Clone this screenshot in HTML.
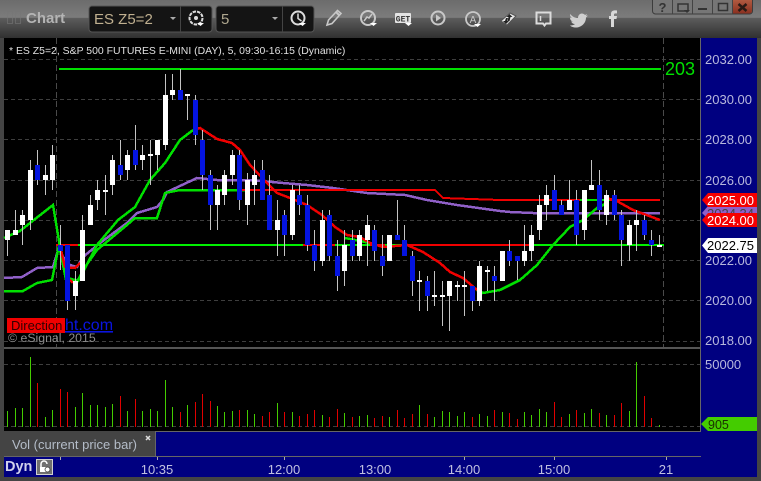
<!DOCTYPE html>
<html><head><meta charset="utf-8"><style>
html,body{margin:0;padding:0;background:#444;width:761px;height:481px;overflow:hidden}
svg{display:block;font-family:"Liberation Sans",sans-serif}
</style></head><body>
<svg width="761" height="481" viewBox="0 0 761 481" xmlns="http://www.w3.org/2000/svg">
<defs><linearGradient id="tb" x1="0" y1="0" x2="0" y2="1"><stop offset="0" stop-color="#6c6c6c"/><stop offset=".46" stop-color="#7c7c7c"/><stop offset=".48" stop-color="#5c5c5c"/><stop offset="1" stop-color="#303030"/></linearGradient>
<linearGradient id="cl" x1="0" y1="0" x2="0" y2="1"><stop offset="0" stop-color="#b05a40"/><stop offset="1" stop-color="#8a3020"/></linearGradient></defs>
<rect width="761" height="481" fill="#444"/>
<rect width="761" height="38" fill="url(#tb)"/>
<!-- window controls -->
<rect x="652.5" y="-3" width="100" height="17" rx="3" fill="#767676" stroke="#3c3c3c"/>
<path d="M733 0h19v11a2.500 2.500 0 0 1-2.500 2.500H733z" fill="url(#cl)"/>
<path d="M672.500 0V14M692.500 0V14M712.500 0V14M732.500 0V14" stroke="#444"/>
<text x="662.500" y="12" font-size="13" font-weight="bold" fill="#333" text-anchor="middle">?</text>
<path d="M678 4h10v7h-10z" fill="none" stroke="#333" stroke-width="1.500"/><path d="M684 10h6l-3 3z" fill="#333"/>
<rect x="698" y="8" width="9" height="2" fill="#333"/>
<rect x="718.500" y="3.500" width="9" height="7" fill="none" stroke="#333" stroke-width="1.500"/>
<path d="M738.500 4l8 7M746.500 4l-8 7" stroke="#2a1a14" stroke-width="2.500"/>
<!-- Chart title -->
<rect x="7.500" y="11.500" width="5" height="12" fill="none" stroke="#777" opacity=".6"/><rect x="15.500" y="11.500" width="5" height="12" fill="none" stroke="#777" opacity=".6"/>
<text x="26" y="23" font-size="15" font-weight="bold" fill="#b4b4b4">Chart</text>
<!-- Dropdowns -->
<rect x="89" y="6" width="123" height="26" rx="3" fill="#141414" stroke="#555"/>
<path d="M180.500 6V32" stroke="#444"/>
<text x="94" y="24" font-size="15" fill="#c0b090">ES Z5=2</text>
<path d="M170 17h6l-3 3z" fill="#aaa"/>
<rect x="216" y="6" width="98" height="26" rx="3" fill="#141414" stroke="#555"/>
<path d="M282.500 6V32" stroke="#444"/>
<text x="221" y="24" font-size="15" fill="#b0a890">5</text>
<path d="M272 17h6l-3 3z" fill="#aaa"/>
<!-- gear -->
<circle cx="196" cy="18" r="6.500" fill="none" stroke="#ddd" stroke-width="2" stroke-dasharray="3.500 1"/><circle cx="196" cy="18" r="2" fill="#ddd"/>
<path d="M197 23h7l-3.500 3z" fill="#fff"/>
<!-- clock -->
<circle cx="298" cy="18" r="6.500" fill="none" stroke="#ddd" stroke-width="2"/><path d="M298 13.500V18.500L301.500 21" fill="none" stroke="#ddd" stroke-width="1.500"/>
<path d="M299 23h7l-3.500 3z" fill="#fff"/>
<!-- pencil -->
<path d="M327 25l1.500-5 9-9.500 3.500 3-9 10z" fill="none" stroke="#c8c8c8" stroke-width="1.600"/><path d="M336 12l3.500 3.500" stroke="#c8c8c8" stroke-width="2"/>
<!-- dial -->
<circle cx="368" cy="18" r="7" fill="none" stroke="#c8c8c8" stroke-width="2"/><path d="M364 21l3-4 2 1 3-4" fill="none" stroke="#c8c8c8" stroke-width="1.500"/>
<path d="M370 23h7l-3.500 3z" fill="#fff"/>
<!-- GET -->
<rect x="395" y="13" width="16" height="10" rx="1" fill="#e4e4e4"/>
<text x="403" y="21.500" font-size="8" font-weight="bold" fill="#333" text-anchor="middle" font-family="Liberation Mono, monospace">GET</text>
<path d="M405 23h7l-3.500 3z" fill="#fff"/>
<!-- play -->
<circle cx="438" cy="18" r="6.500" fill="none" stroke="#c8c8c8" stroke-width="2"/><path d="M436 14.500v7l5-3.500z" fill="#c8c8c8"/>
<!-- A -->
<circle cx="473" cy="19" r="7" fill="none" stroke="#c8c8c8" stroke-width="1.800"/>
<text x="473" y="23" font-size="10" fill="#c8c8c8" text-anchor="middle">A</text>
<path d="M474 24h7l-3.500 3z" fill="#fff"/>
<!-- diamond -->
<path d="M501 21l9-8 6 3-9 9z" fill="#e8e8e8" stroke="#555"/><path d="M509.500 14l3 3h-2l-1 4h-2l1-4h-2z M506 24l-3-3h2l1-3h2l-1 3h2z" fill="#222"/>
<!-- bubble -->
<path d="M536.500 12.500h14v11h-4.500l-1.500 2-1.500-2h-6.500z" fill="none" stroke="#dcdcdc" stroke-width="2"/><path d="M540.500 16v5" stroke="#dcdcdc" stroke-width="1.500"/>
<!-- twitter -->
<path d="M570 14c3 3 5 4 8 4 0-4 4-6 7-3l2-1-1 2 2-.5-2 2c0 6-5 10-10 10-3 0-5-1-6-2 2 0 4-.5 5-1.500-2 0-3-1-4-2.500h2c-2-.5-3-2-3-4l2 .5c-2-1.500-2-3-2-4z" fill="#cfcfcf"/>
<!-- facebook -->
<path d="M611 27v-8h-2v-3h2v-2c0-3 2-4 6-3.500v3c-2-.3-3 0-3 1v1.500h3l-.5 3H614v8z" fill="#d8d8d8"/>

<!-- chart -->
<rect x="4" y="38" width="696" height="310" fill="#000"/>
<rect x="4" y="349" width="696" height="82" fill="#000"/>
<rect x="4" y="347" width="696" height="2" fill="#555"/>
<g shape-rendering="crispEdges">
<path d="M4 59.500H700M4 99.500H700M4 139.500H700M4 180.500H700M4 220.500H700M4 260.500H700M4 300.500H700M4 341.500H700M4 364.500H700M4 426.500H700" stroke="#3e3e3e" stroke-dasharray="4 3"/>
<path d="M56.500 38V347M663.500 38V347" stroke="#4a4a4a" stroke-dasharray="6 3"/>
<path d="M59 69H661" stroke="#00e000" stroke-width="2" fill="none"/>
<!-- purple -->
<polyline fill="none" stroke="#9060c8" stroke-width="2.500" points="4,278 22,277 37,268 53,267 59,247 63,257 70,265 77,267 83,257 100,243 127,223 137,213 157,207 163,200 167,192 197,178 217,180 250,180 283,183 307,185 333,188 367,193 405,195 427,200 457,205 500,211 510,212 533,213 660,213"/>
<!-- slow green / red -->
<polyline fill="none" stroke="#00e000" stroke-width="2.500" points="4,291 23,291 37,283 52,280 59,245 66,280 78,280 85,267 97,250 127,225 135,218 157,218 165,193 180,190 250,190"/>
<polyline fill="none" stroke="#f00000" stroke-width="2" points="240,190 435,190 443,198 500,200 660,200"/>
<path d="M580 200H610" stroke="#00e000" stroke-width="2"/>
<!-- horizontal -->
<path d="M56 245H664" stroke="#00f000" stroke-width="2"/>
<path d="M56 245H78M303 245H335M370 245H385M408 245H533" stroke="#f00000" stroke-width="2"/>
<!-- fast -->
<polyline fill="none" stroke="#00e000" stroke-width="2.500" points="4,238 20,231 30,223 53,205 60,247 68,278 78,281 83,272 97,245 118,220 135,207 150,180 165,163 180,140 193,130"/>
<polyline fill="none" stroke="#00e000" stroke-width="2.500" points="477,290 483,293 500,290 520,280 537,265 553,245 570,227 583,220 597,208 605,204"/>
<path d="M345 238L370 243" stroke="#00e000" stroke-width="2.500"/>
<polyline fill="none" stroke="#f00000" stroke-width="2.500" points="193,130 200,128 217,139 232,143 240,150 250,165 267,183 277,193 290,198 307,205 322,215 335,227 347,235 360,237 370,243 383,247 407,245 423,252 440,263 450,272 463,278 477,290"/>
<polyline fill="none" stroke="#f00000" stroke-width="2.500" points="605,198 615,200 633,210 660,220"/>
<polyline fill="none" stroke="#f00000" stroke-width="2.500" points="61,250 65,267 75,268 80,263"/>
<path d="M70 280L73 283" stroke="#f00000" stroke-width="2.500"/>
<!-- wicks -->
<path fill="none" stroke="#c4c4c4" d="M7.500 230V256M15.500 210V235M22.500 210V245M30.500 160V230M37.500 150V185M45.500 165V195M52.500 145V190M60.500 225V270M67.500 245V310M75.500 271V310M82.500 215V281M90.500 195V225M97.500 180V210M105.500 175V215M112.500 155V195M120.500 140V180M127.500 150V180M135.500 125V170M142.500 145V170M150.500 140V185M157.500 140V170M165.500 74V150M172.500 74V100M180.500 69V100M187.500 94V120M195.500 95V145M202.500 130V190M210.500 170V230M217.500 185V230M224.500 170V205M232.500 150V185M239.500 150V210M247.500 173V225M254.500 160V205M262.500 160V200M269.500 175V230M277.500 200V256M284.500 210V256M292.500 185V240M299.500 185V215M307.500 195V251M314.500 230V271M322.500 210V266M329.500 210V261M337.500 240V291M344.500 230V286M352.500 230V261M359.500 230V261M367.500 215V266M374.500 225V261M382.500 235V276M389.500 235V261M397.500 200V240M404.500 225V256M412.500 251V296M419.500 271V311M427.500 276V311M434.500 271V306M442.500 281V326M449.500 281V331M457.500 281V301M464.500 271V316M472.500 286V311M479.500 261V306M487.500 266V291M494.500 266V301M502.500 251V281M509.500 240V266M517.500 256V280M524.500 225V266M531.500 225V261M539.500 195V240M546.500 185V220M554.500 175V210M561.500 200V215M569.500 180V210M576.500 190V245M584.500 190V240M591.500 160V190M599.500 170V220M606.500 190V225M614.500 190V220M621.500 210V266M629.500 220V261M636.500 210V251M644.500 215V240M651.500 230V256M659.500 235V247"/>
<!-- white bodies -->
<path fill="none" stroke="#fff" stroke-width="5" d="M7.500 230V240M15.500 230V235M22.500 215V225M30.500 170V220M45.500 175V180M52.500 155V180M75.500 281V296M82.500 230V281M90.500 205V225M97.500 190V200M105.500 190V192M112.500 160V185M127.500 155V170M142.500 155V160M150.500 154V156M157.500 140V155M165.500 95V145M172.500 90V95M187.500 94V96M217.500 190V205M224.500 175V195M232.500 155V175M247.500 180V205M254.500 175V185M277.500 220V230M292.500 190V235M322.500 220V261M344.500 245V271M359.500 235V256M367.500 225V240M389.500 235V261M419.500 280V282M434.500 295V297M442.500 295V297M449.500 281V296M457.500 285V287M464.500 285V287M479.500 266V301M487.500 270V272M502.500 251V281M524.500 251V261M531.500 235V251M539.500 205V230M546.500 195V205M569.500 200V210M584.500 190V230M591.500 185V190M606.500 195V215M629.500 225V245M636.500 220V225M659.500 245V247"/>
<!-- blue bodies -->
<path fill="none" stroke="#0414e0" stroke-width="5" d="M37.500 165V180M60.500 245V251M67.500 245V301M120.500 165V175M135.500 150V165M180.500 90V100M195.500 100V135M202.500 140V175M210.500 175V205M239.500 155V200M262.500 170V200M269.500 195V230M284.500 215V235M299.500 195V205M307.500 205V245M314.500 245V261M329.500 215V256M337.500 256V276M352.500 240V256M374.500 230V251M382.500 256V266M397.500 235V240M404.500 240V256M412.500 256V281M427.500 281V296M472.500 286V301M494.500 276V281M509.500 251V261M517.500 256V261M554.500 190V210M561.500 205V215M576.500 200V235M599.500 185V210M614.500 195V215M621.500 215V240M644.500 220V235M651.500 240V245"/>
<!-- volume green -->
<path fill="none" stroke="#44cc00" d="M7.500 411V427M15.500 408V427M22.500 408V427M30.500 357V427M45.500 417V427M52.500 410V427M75.500 407V427M82.500 393V427M90.500 405V427M97.500 405V427M105.500 407V427M112.500 404V427M127.500 411V427M142.500 411V427M150.500 409V427M157.500 411V427M165.500 380V427M172.500 407V427M187.500 405V427M217.500 406V427M224.500 412V427M232.500 411V427M247.500 410V427M254.500 414V427M277.500 403V427M292.500 412V427M322.500 415V427M344.500 413V427M359.500 416V427M367.500 415V427M389.500 417V427M419.500 405V427M434.500 417V427M442.500 411V427M449.500 412V427M457.500 416V427M464.500 412V427M479.500 414V427M487.500 416V427M502.500 412V427M524.500 412V427M531.500 415V427M539.500 409V427M546.500 412V427M569.500 414V427M584.500 413V427M591.500 409V427M606.500 415V427M629.500 411V427M636.500 362V427M659.500 425V427"/>
<!-- volume red -->
<path fill="none" stroke="#e00000" d="M37.500 383V427M60.500 389V427M67.500 392V427M120.500 396V427M135.500 399V427M180.500 412V427M195.500 402V427M202.500 394V427M210.500 401V427M239.500 410V427M262.500 416V427M269.500 412V427M284.500 412V427M299.500 416V427M307.500 414V427M314.500 410V427M329.500 417V427M337.500 409V427M352.500 417V427M374.500 418V427M382.500 416V427M397.500 410V427M404.500 418V427M412.500 414V427M427.500 414V427M472.500 417V427M494.500 410V427M509.500 413V427M517.500 419V427M554.500 402V427M561.500 417V427M576.500 410V427M599.500 413V427M614.500 415V427M621.500 403V427M644.500 396V427M651.500 418V427"/>
</g>
<text x="9" y="54" font-size="10.450" fill="#e0e0e0">* ES Z5=2, S&amp;P 500 FUTURES E-MINI (DAY), 5, 09:30-16:15 (Dynamic)</text>
<text x="665" y="75" font-size="18" fill="#00e000">203</text>
<!-- direction -->
<text x="65" y="330" font-size="16" fill="#0a14e0" text-decoration="underline">ht.com</text>
<rect x="7" y="318" width="58" height="15" fill="#f00000"/>
<text x="11" y="330" font-size="13" fill="#300">Direction</text>
<text x="8" y="342" font-size="12.300" fill="#8c8c8c">© eSignal, 2015</text>

<!-- right axis -->
<rect x="701" y="38" width="56" height="439" fill="#000080"/>
<rect x="700" y="38" width="1" height="418" fill="#666"/>
<g font-size="13" fill="#b8b8dc">
<text x="705" y="64">2032.00</text><text x="705" y="104">2030.00</text><text x="705" y="144">2028.00</text><text x="705" y="185">2026.00</text><text x="705" y="265">2022.00</text><text x="705" y="305">2020.00</text><text x="705" y="345">2018.00</text>
<text x="705" y="369">50000</text>
</g>
<path d="M702 213l6-7h49v13h-49z" fill="#9060c8"/><text x="707" y="218" font-size="13" fill="#444">2024.34</text>
<path d="M702 200l6-7h49v14h-49z" fill="#f50000"/><text x="707" y="205" font-size="13" fill="#fff">2025.00</text>
<path d="M702 220l6-7h49v14h-49z" fill="#f50000"/><text x="707" y="225" font-size="13" fill="#fff">2024.00</text>
<path d="M702 245.500l6-7.500h49v15h-49z" fill="#fff"/><text x="707" y="250" font-size="13" fill="#000">2022.75</text>
<path d="M701 424l7-7h49v14h-49z" fill="#44cc00"/><text x="708" y="429" font-size="12.500" fill="#1a3000">905</text>
<!-- vol legend and x axis -->
<rect x="155" y="431" width="546" height="25" fill="#000080"/>
<rect x="155" y="431" width="546" height="1" fill="#666"/>
<rect x="155" y="431" width="1" height="25" fill="#666"/>
<rect x="4" y="456" width="697" height="1" fill="#666"/>
<rect x="4" y="457" width="697" height="20" fill="#000080"/>
<text x="12" y="449" font-size="13" fill="#b4bcc8">Vol (current price bar)</text>
<path d="M146 436l4 4M150 436l-4 4" stroke="#ddd" stroke-width="1.500"/>
<path d="M60.500 457V460M157.500 457V460M284.500 457V460M464.500 457V460M554.500 457V460M666.500 457V460" stroke="#aaa"/>
<text x="5" y="471" font-size="14.500" font-weight="bold" fill="#d0d0ec">Dyn</text>
<rect x="36.500" y="459.500" width="16" height="15" fill="#707070" stroke="#d0d0d0"/>
<path d="M41 467v-3a3 3 0 0 1 6 0" fill="none" stroke="#fff" stroke-width="1.500"/><rect x="40" y="467" width="6" height="5" fill="#fff"/><circle cx="47.500" cy="469.500" r="2.500" fill="#fff" stroke="#333" stroke-width=".7"/>
<g font-size="13" fill="#c0c0e0" text-anchor="middle">
<text x="157" y="474">10:35</text><text x="284" y="474">12:00</text><text x="375" y="474">13:00</text><text x="464" y="474">14:00</text><text x="554" y="474">15:00</text><text x="666" y="474">21</text>
</g>
</svg>
</body></html>
